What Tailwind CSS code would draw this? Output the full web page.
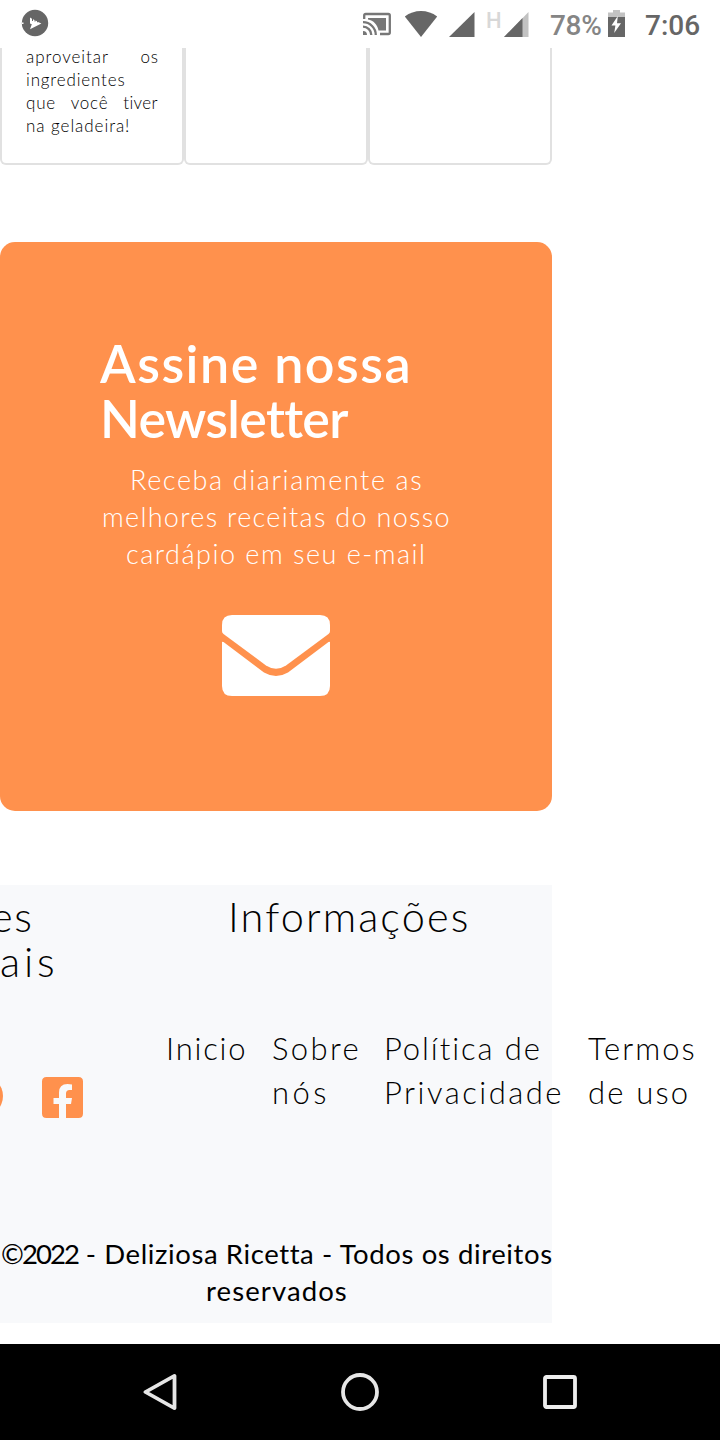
<!DOCTYPE html>
<html lang="pt-BR">
<head>
<meta charset="utf-8">
<title>Deliziosa Ricetta</title>
<script src="https://cdn.jsdelivr.net/npm/@tailwindcss/browser@4"></script>
</head>
<body class="bg-white">
<div class="flex h-[1440px] w-[720px] flex-col overflow-hidden bg-white font-['Lato',sans-serif] font-light text-black">

  <!-- Status bar -->
  <header class="flex h-12 shrink-0 items-start font-['Roboto',sans-serif] text-[28px] leading-[52px] text-[#666]">
    <svg class="ml-[21px] mt-[9px] size-7 shrink-0" viewBox="0 0 28 28"><circle cx="14" cy="14" r="13.2" fill="#666"/><path d="M9 8.5l2 1.2V12h1v-1.8l1.5.8v1.5h1v-1l1.5.8v1h1v-.4l3.4 1.7L9 20.2l1.8-5L9 14.4z" fill="#fff"/><path d="M1 13.5h1.5v1.5H1z" fill="#fff"/></svg>
    <svg class="ml-[313px] mt-3 h-6 w-[30px] shrink-0" viewBox="0 0 30 24"><g fill="none" stroke="#777" stroke-width="2.3"><path d="M2.2 7V3.5Q2.2 2 3.7 2h22.6q1.5 0 1.5 1.5v17q0 1.5-1.5 1.5H18"/><path d="M1 10.2A12.8 12.8 0 0 1 13.8 23M1 14.7A8.3 8.3 0 0 1 9.3 23"/></g><path d="M1 19a4 4 0 0 1 4 4H1zM6 6h18v12.5h-7.5C15.5 12.5 11.5 8.5 6 7.5z" fill="#777"/></svg>
    <svg class="ml-3 mt-[10px] h-7 w-[34px] shrink-0" viewBox="0 0 34 28"><path d="M17 27L.8 6.5Q8 1 17 1t16.2 5.5z" fill="#666"/></svg>
    <svg class="ml-[11px] mt-3 h-[25px] w-[26px] shrink-0" viewBox="0 0 26 25"><path d="M0 25L25.5 0v25z" fill="#666"/></svg>
    <span class="ml-[11px] w-[18px] shrink-0 text-[22px] font-medium leading-[41px] text-[#d8d8d8]">H</span>
    <svg class="mt-3 h-[25px] w-[26px] shrink-0" viewBox="0 0 26 25"><path d="M0 25L24.5 0v25z" fill="#c2c2c2"/><path d="M0 25L18.5 6.1V25z" fill="#666"/></svg>
    <span class="ml-5 w-[57px] shrink-0 font-medium tracking-[-0.3px] text-[#858585]">78%</span>
    <svg class="ml-px mt-[10px] h-[27px] w-[18px] shrink-0" viewBox="0 0 18 27"><path d="M0 2.5h5V0h7v2.5h5V8H0z" fill="#c2c2c2"/><path d="M0 7h17v20H0z" fill="#666"/><path d="M9.8 6L3.5 15.5h3.9L6.2 23l6.8-9.8H9z" fill="#fff"/></svg>
    <span class="ml-[19px] font-medium">7:06</span>
  </header>

  <!-- Bottom of the recipe cards -->
  <section class="flex h-[117px] w-[552px] shrink-0 overflow-hidden">
    <article class="w-[184px] rounded-b-md border-2 border-t-0 border-[#e1e1e1] pl-6 text-[17px] leading-[23px]">
      <div class="-mt-[3px] flex w-[133px] justify-between tracking-[0.95px]"><span>aproveitar</span><span>os</span></div>
      <div class="tracking-[0.85px]">ingredientes</div>
      <div class="flex w-[132px] justify-between tracking-[0.8px]"><span>que</span><span>você</span><span class="tracking-[0.4px]">tiver</span></div>
      <div class="whitespace-nowrap tracking-[0.95px]">na geladeira!</div>
    </article>
    <article class="w-[184px] rounded-b-md border-2 border-t-0 border-[#e1e1e1]"></article>
    <article class="w-[184px] rounded-b-md border-2 border-t-0 border-[#e1e1e1]"></article>
  </section>

  <!-- Newsletter -->
  <section class="mt-[76.5px] flex h-[569.5px] w-[552px] shrink-0 flex-col items-start whitespace-nowrap rounded-[15px] bg-[#ff914d] pt-[94px] text-white">
    <h2 class="ml-[100px] text-[52px] font-semibold leading-[55px]"><span class="block tracking-[1.5px]">Assine nossa</span><span class="block tracking-[-0.7px]">Newsletter</span></h2>
    <p class="mt-[15px] text-[27px] leading-[37px]">
      <span class="block pl-[130px] tracking-[1.6px]">Receba diariamente as</span>
      <span class="block pl-[102px] tracking-[1.3px]">melhores receitas do nosso</span>
      <span class="block pl-[126px] tracking-[1.5px]">cardápio em seu e-mail</span>
    </p>
    <svg class="ml-[222px] mt-[43px] h-[81px] w-[108px]" viewBox="0 0 108 81" fill="#fff"><path d="M0 10Q0 0 10 0h88q10 0 10 10v6q0 1.800-1.500 3L64 50.500Q54 57 44 50.500L1.500 19Q0 17.800 0 16z"/><path d="M0 27.500q0-1.500 1.500-.4L42 57.500q12 7 24 0l40.500-30.400q1.500-1.100 1.500.4V71q0 10-10 10H10Q0 81 0 71z"/></svg>
  </section>

  <!-- Footer -->
  <footer class="mt-[74px] flex h-[438px] w-[552px] shrink-0 flex-col whitespace-nowrap bg-[#f8f9fb]">
    <div class="flex h-[141px] shrink-0 pt-[8.5px] text-[41.5px] leading-[45px]">
      <h3 class="w-[228px] shrink-0"><span class="-ml-[9px] block tracking-[1.5px]">es</span><span class="block tracking-[3.8px]">ais</span></h3>
      <h3 class="tracking-[2.1px]">Informações</h3>
    </div>
    <div class="flex h-[209px] shrink-0 text-[31px] leading-[44px]">
      <div class="flex w-[166px] shrink-0 pt-[51px]">
        <svg class="h-10 w-1 shrink-0" viewBox="0 0 4 40"><circle cx="-17" cy="19" r="20" fill="#ff914d"/></svg>
        <svg class="ml-[38px] size-[41px] shrink-0" viewBox="0 0 41 41"><path d="M4.5 0h32Q41 0 41 4.500v32q0 4.500-4.500 4.500H24V27h5l1-6h-6v-4.500q0-3.500 3.500-3.500H30V7.500q-2-.5-4.500-.5Q17 7 17 15.500V21h-5.500v6H17v14H4.500Q0 41 0 36.500v-32Q0 0 4.500 0z" fill="#ff914d"/></svg>
      </div>
      <a class="w-[106px] shrink-0 tracking-[1.8px]">Inicio</a>
      <a class="w-[112px] shrink-0"><span class="block tracking-[2.4px]">Sobre</span><span class="block tracking-[3.4px]">nós</span></a>
      <a class="w-[204px] shrink-0"><span class="block tracking-[1.9px]">Política de</span><span class="block tracking-[2.5px]">Privacidade</span></a>
      <a class="shrink-0"><span class="block tracking-[2px]">Termos</span><span class="block tracking-[2.2px]">de uso</span></a>
    </div>
    <p class="text-[27.5px] font-normal leading-[37px]"><span class="block pl-px tracking-[0.6px]"><span class="tracking-[-1.9px]">©2022</span> - Deliziosa Ricetta - Todos os direitos</span><span class="block pl-[206px] tracking-[1.1px]">reservados</span></p>
  </footer>

  <!-- Navigation bar -->
  <nav class="mt-auto flex h-24 shrink-0 items-center bg-black">
    <svg class="ml-[142px] size-9" viewBox="0 0 36 40" preserveAspectRatio="none" fill="none" stroke="#e6e6e6" stroke-width="3.8" stroke-linejoin="round"><path d="M32.500 2v36L3.500 20z"/></svg>
    <svg class="ml-[162px] size-10" viewBox="0 0 40 40" fill="none" stroke="#e6e6e6" stroke-width="3.8"><circle cx="20" cy="20" r="17"/></svg>
    <svg class="ml-[162px] size-9" viewBox="0 0 36 36" fill="none" stroke="#eee" stroke-width="3.8"><rect x="3" y="3" width="30" height="30" rx="1.5"/></svg>
  </nav>
</div>
</body>
</html>
